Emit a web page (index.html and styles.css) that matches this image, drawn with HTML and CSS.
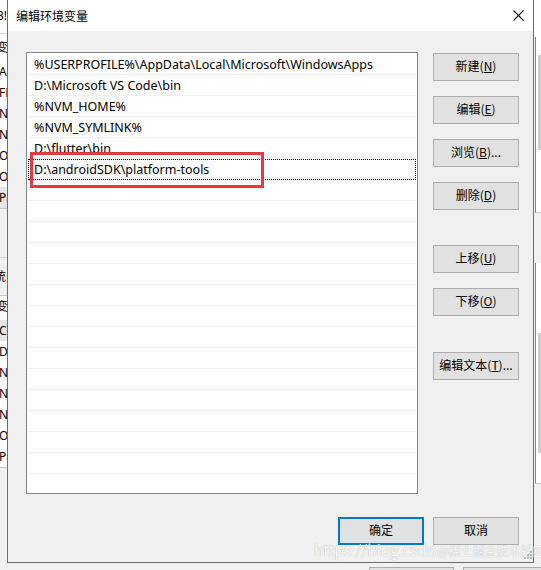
FILE: index.html
```html
<!DOCTYPE html>
<html lang="zh-CN">
<head>
<meta charset="utf-8">
<title>编辑环境变量</title>
<link rel="stylesheet" href="styles.css">
</head>
<body>
  <div class="back-left">
    <div class="bl-top"><span>3!</span></div>
    <div class="bl-list">
      <div class="bl-head">变量</div>
      <div class="bl-row">ANDROID</div>
      <div class="bl-row">FLUTTER</div>
      <div class="bl-row">NVM_HOME</div>
      <div class="bl-row">NVM_SYMLINK</div>
      <div class="bl-row">OneDrive</div>
      <div class="bl-row">OneDriveConsumer</div>
      <div class="bl-row hl">Path</div>
    </div>
    <div class="bl-gap"></div>
    <div class="bl-label">统</div>
    <div class="bl-list second">
      <div class="bl-head">变量</div>
      <div class="bl-row hl">ComSpec</div>
      <div class="bl-row">DriverData</div>
      <div class="bl-row">NUMBER_OF</div>
      <div class="bl-row">NVM_HOME</div>
      <div class="bl-row">NVM_SYMLINK</div>
      <div class="bl-row">OS</div>
      <div class="bl-row">Path</div>
    </div>
  </div>

  <div class="back-right">
    <div class="br-top"></div>
    <div class="br-list"><div class="br-thumb"></div></div>
    <div class="br-list second"><div class="br-thumb low"></div></div>
  </div>

  <div class="back-btns">
    <div class="back-btn"></div>
    <div class="back-btn wide"></div>
  </div>

  <div class="dialog">
    <div class="titlebar">
      <span class="title">编辑环境变量</span>
      <svg class="close" width="11" height="11" viewBox="0 0 11 11"><path d="M0.5 0.5L10.5 10.5M10.5 0.5L0.5 10.5" stroke="#111" stroke-width="1.1" fill="none"/></svg>
    </div>
    <div class="content">
      <div class="main">
        <div class="list">
          <div class="row">%USERPROFILE%\AppData\Local\Microsoft\WindowsApps</div>
          <div class="row">D:\Microsoft VS Code\bin</div>
          <div class="row">%NVM_HOME%</div>
          <div class="row">%NVM_SYMLINK%</div>
          <div class="row">D:\flutter\bin</div>
          <div class="row focus">D:\androidSDK\platform-tools</div>
          <div class="row"></div><div class="row"></div><div class="row"></div>
          <div class="row"></div><div class="row"></div><div class="row"></div>
          <div class="row"></div><div class="row"></div><div class="row"></div>
          <div class="row"></div><div class="row"></div><div class="row"></div>
          <div class="row"></div><div class="row"></div><div class="row"></div>
          <div class="annot"></div>
        </div>
        <div class="side">
          <button class="btn">新建(<u>N</u>)</button>
          <button class="btn">编辑(<u>E</u>)</button>
          <button class="btn">浏览(<u>B</u>)...</button>
          <button class="btn">删除(<u>D</u>)</button>
          <button class="btn sep">上移(<u>U</u>)</button>
          <button class="btn">下移(<u>O</u>)</button>
          <button class="btn sep2">编辑文本(<u>T</u>)...</button>
        </div>
      </div>
      <div class="footer">
        <button class="btn default">确定</button>
        <button class="btn">取消</button>
      </div>
    </div>
  </div>

  <div class="watermark"><span class="wm-url">https://blog.csdn</span><span class="wm-at">@稀土掘金技术社区</span></div>
  <svg class="grip" width="8" height="8" viewBox="0 0 8 8">
    <rect x="6" y="0" width="2" height="2" fill="#b8b8b8"/>
    <rect x="3" y="3" width="2" height="2" fill="#b8b8b8"/>
    <rect x="6" y="3" width="2" height="2" fill="#b8b8b8"/>
    <rect x="0" y="6" width="2" height="2" fill="#b8b8b8"/>
    <rect x="3" y="6" width="2" height="2" fill="#b8b8b8"/>
    <rect x="6" y="6" width="2" height="2" fill="#b8b8b8"/>
  </svg>
</body>
</html>
```
FILE: styles.css
```css
html, body {
  margin: 0;
  padding: 0;
}
body {
  width: 541px;
  height: 570px;
  overflow: hidden;
  position: relative;
  background: #f0f0f0;
  font-family: "Noto Sans", "Noto Sans CJK SC", sans-serif;
  color: #000;
}

/* ---------- background window fragments ---------- */
.back-left {
  position: absolute;
  left: 0;
  top: 0;
  width: 7px;
  height: 570px;
  overflow: hidden;
  display: flex;
  flex-direction: column;
  font-size: 12px;
  white-space: nowrap;
}
.bl-top {
  height: 33px;
  background: #fff;
  border-bottom: 1px solid #d5d5d5;
  line-height: 32px;
  text-indent: -3px;
}
.bl-list {
  background: #fff;
  padding-top: 3px;
  border-bottom: 1px solid #c8c8c8;
}
.bl-head {
  height: 24px;
  line-height: 22px;
  text-indent: -4px;
}
.bl-row {
  height: 21px;
  line-height: 21px;
  text-indent: -1px;
}
.bl-row.hl { background: #e6e6e6; }
.bl-gap {
  height: 48px;
  border-bottom: 1px solid #d5d5d5;
}
.bl-label {
  height: 37px;
  line-height: 38px;
  text-indent: -6px;
  border-bottom: 1px solid #c8c8c8;
}
.bl-list.second { padding-top: 0; }

.back-right {
  position: absolute;
  left: 534px;
  top: 0;
  width: 7px;
  height: 570px;
  overflow: hidden;
  display: flex;
  flex-direction: column;
}
.br-top {
  height: 37px;
  background: #fff;
}
.br-list {
  height: 175px;
  border-left: 1px solid #828790;
  border-bottom: 1px solid #c8c8c8;
  background: #fff;
  position: relative;
  margin-left: 1px;
}
.br-list.second {
  margin-top: 50px;
  height: 220px;
}
.br-thumb {
  position: absolute;
  left: 2px;
  top: 18px;
  width: 5px;
  height: 95px;
  background: #cdcdcd;
}
.br-thumb.low { top: 70px; height: 120px; }

.back-btns {
  position: absolute;
  left: 369px;
  top: 567px;
  display: flex;
  gap: 9px;
}
.back-btn {
  width: 85px;
  height: 28px;
  box-sizing: border-box;
  border: 1px solid #adadad;
  background: #e1e1e1;
}
.back-btn.wide { width: 90px; }

/* ---------- dialog ---------- */
.dialog {
  position: absolute;
  left: 7px;
  top: -1px;
  width: 527px;
  height: 564px;
  box-sizing: border-box;
  border: 1px solid #6e6e6e;
  background: #f0f0f0;
  display: flex;
  flex-direction: column;
}
.titlebar {
  height: 31px;
  flex: none;
  background: #fff;
  display: flex;
  align-items: center;
  justify-content: space-between;
  padding-left: 8px;
  padding-right: 9px;
}
.title {
  font-family: "Noto Sans CJK SC", sans-serif;
  font-size: 12px;
  line-height: 16px;
}
.close { display: block; }

.content {
  flex: 1;
  display: flex;
  flex-direction: column;
  padding: 21px 14px 17px 18px;
}
.main {
  display: flex;
  gap: 15px;
}
.list {
  position: relative;
  width: 392px;
  height: 442px;
  box-sizing: border-box;
  border: 1px solid #828790;
  background: #fff;
  padding: 1px;
  overflow: hidden;
}
.row {
  height: 21px;
  box-sizing: border-box;
  border-bottom: 1px solid #f0f0f0;
  padding-left: 6px;
  font-size: 12.5px;
  line-height: 21px;
  white-space: nowrap;
}
.row.focus {
  outline: 1px dotted #000;
  outline-offset: -1px;
}
.annot {
  position: absolute;
  left: 3px;
  top: 99px;
  width: 234px;
  height: 36px;
  box-sizing: border-box;
  border: 3px solid #e5393e;
}

.side {
  display: flex;
  flex-direction: column;
  padding-top: 1px;
}
.btn {
  width: 86px;
  height: 28px;
  box-sizing: border-box;
  border: 1px solid #adadad;
  background: #e1e1e1;
  font-family: "Noto Sans CJK SC", sans-serif;
  font-size: 12px;
  line-height: 16px;
  color: #000;
  padding: 0 0 3px 0;
  margin: 0;
}
.btn u { text-underline-offset: 1px; }
.side .btn + .btn { margin-top: 15px; }
.side .btn.sep { margin-top: 35px; }
.side .btn.sep2 { margin-top: 36px; }

.footer {
  margin-top: 23px;
  display: flex;
  justify-content: flex-end;
  gap: 9px;
}
.btn.default { border: 2px solid #0078d7; }

/* ---------- overlays ---------- */
.watermark {
  position: absolute;
  left: 314px;
  top: 539px;
  display: flex;
  align-items: baseline;
  font-family: "Noto Sans CJK SC", sans-serif;
  color: rgba(255, 255, 255, 0.92);
  text-shadow: 0 0 1px rgba(110, 110, 110, 0.55);
  white-space: nowrap;
}
.wm-url { font-size: 15px; letter-spacing: 0.1px; }
.wm-at { font-size: 12px; margin-left: 1px; }
.grip {
  position: absolute;
  left: 524px;
  top: 551px;
}
```
